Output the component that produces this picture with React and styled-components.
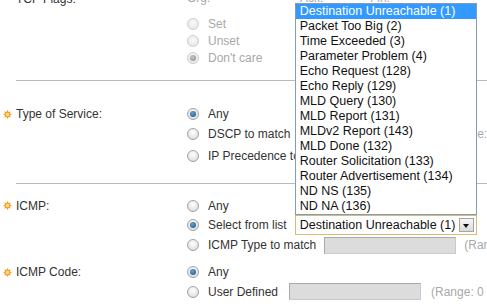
import React from "react";
import styled, { createGlobalStyle } from "styled-components";

const GlobalStyle = createGlobalStyle`
  html, body {
    margin: 0;
    padding: 0;
    background: #fff;
    overflow: hidden;
  }
  body {
    font-family: "Liberation Sans", Arial, sans-serif;
    font-size: 12px;
    color: #333;
  }
`;

const icmpTypes = [
  "Destination Unreachable (1)",
  "Packet Too Big (2)",
  "Time Exceeded (3)",
  "Parameter Problem (4)",
  "Echo Request (128)",
  "Echo Reply (129)",
  "MLD Query (130)",
  "MLD Report (131)",
  "MLDv2 Report (143)",
  "MLD Done (132)",
  "Router Solicitation (133)",
  "Router Advertisement (134)",
  "ND NS (135)",
  "ND NA (136)",
];

function Gear() {
  return (
    <svg width="9" height="9" viewBox="0 0 9 9">
      <polygon
        fill="#e99a26"
        points="8.9,4.5 6.9,5.5 7.61,7.61 5.5,6.9 4.5,8.9 3.5,6.9 1.39,7.61 2.1,5.5 0.1,4.5 2.1,3.5 1.39,1.39 3.5,2.1 4.5,0.1 5.5,2.1 7.61,1.39 6.9,3.5"
      />
      <circle cx="4.5" cy="4.5" r="1.9" fill="#ffd870" />
    </svg>
  );
}

function Radio({ label, checked, disabled, h, children }) {
  return (
    <Option $h={h} $disabled={disabled}>
      <RadioDot $checked={checked} $disabled={disabled} />
      <span>{label}</span>
      {children}
    </Option>
  );
}

function App() {
  return (
    <Page>
      <GlobalStyle />
      <Inner>
        <Section $pt={0} $pb={14}>
          <FieldLabel $h={17}>
            <Spacer />
            TCP Flags:
          </FieldLabel>
          <FlagGrid>
            <FlagColumn>
              <ColHead>Org.</ColHead>
              <Radio label="Set" disabled h={17} />
              <Radio label="Unset" disabled h={17} />
              <Radio label="Don't care" disabled checked h={17} />
            </FlagColumn>
            <FlagColumn>
              <ColHead>Ack.</ColHead>
            </FlagColumn>
            <FlagColumn>
              <ColHead>Fin.</ColHead>
            </FlagColumn>
          </FlagGrid>
        </Section>
        <Divider />

        <Section $pt={23} $pb={14}>
          <FieldLabel $h={20}>
            <Gear />
            Type of Service:
          </FieldLabel>
          <Options>
            <Radio label="Any" checked h={20} />
            <Radio label="DSCP to match" h={19}>
              <TextBox $ml={14} />
              <RangeText>(Range: 0 - 63)</RangeText>
            </Radio>
            <Radio label="IP Precedence to match" h={26} />
          </Options>
        </Section>
        <Divider />

        <Section $pt={12} $pb={0}>
          <FieldLabel $h={19}>
            <Gear />
            ICMP:
          </FieldLabel>
          <Options>
            <Radio label="Any" h={19} />
            <Radio label="Select from list" checked h={20}>
              <SelectBox>
                <ListBox>
                  {icmpTypes.map((t, i) => (
                    <ListItem key={t} $active={i === 0}>
                      {t}
                    </ListItem>
                  ))}
                </ListBox>
                <SelectText>Destination Unreachable (1)</SelectText>
                <ArrowButton />
              </SelectBox>
            </Radio>
            <Radio label="ICMP Type to match" h={20}>
              <TextBox $ml={8} />
              <RangeText>(Range: 0 - 255)</RangeText>
            </Radio>
          </Options>
        </Section>

        <Section $pt={7} $pb={0}>
          <FieldLabel $h={20}>
            <Gear />
            ICMP Code:
          </FieldLabel>
          <Options>
            <Radio label="Any" checked h={20} />
            <Radio label="User Defined" h={19}>
              <TextBox $ml={11} />
              <RangeText $ml={10}>(Range: 0 - 255)</RangeText>
            </Radio>
          </Options>
        </Section>
      </Inner>
    </Page>
  );
}

const Page = styled.div`
  width: 487px;
  height: 306px;
  overflow: hidden;
  position: relative;
`;

const Inner = styled.div`
  margin-top: -10px;
`;

const Section = styled.div`
  display: grid;
  grid-template-columns: 184px 1fr;
  padding: ${(p) => p.$pt}px 0 ${(p) => p.$pb}px 3px;
`;

const FieldLabel = styled.div`
  display: flex;
  align-items: center;
  gap: 4px;
  height: ${(p) => p.$h}px;
  color: #333;
  white-space: nowrap;
`;

const Spacer = styled.span`
  width: 9px;
`;

const FlagGrid = styled.div`
  display: grid;
  grid-template-columns: 113px 70px 1fr;
`;

const FlagColumn = styled.div`
  display: flex;
  flex-direction: column;
`;

const ColHead = styled.div`
  height: 17px;
  line-height: 17px;
  margin-bottom: 8px;
  color: #aaa;
`;

const Options = styled.div`
  display: flex;
  flex-direction: column;
`;

const Option = styled.label`
  display: flex;
  align-items: center;
  height: ${(p) => p.$h}px;
  white-space: nowrap;
  color: ${(p) => (p.$disabled ? "#a8a8a8" : "#333")};
`;

const RadioDot = styled.span`
  position: relative;
  flex: none;
  width: 12px;
  height: 12px;
  margin-right: 9px;
  box-sizing: border-box;
  border-radius: 50%;
  border: 1px solid ${(p) => (p.$disabled ? "#cfcfcf" : "#a3a3a3")};
  background: ${(p) =>
    p.$disabled
      ? "radial-gradient(circle at 50% 40%, #fafafa, #e2e2e2)"
      : "radial-gradient(circle at 50% 35%, #ffffff, #d6d6d6)"};

  &::after {
    content: "";
    display: ${(p) => (p.$checked ? "block" : "none")};
    position: absolute;
    left: 2px;
    top: 2px;
    width: 6px;
    height: 6px;
    border-radius: 50%;
    background: ${(p) =>
      p.$disabled
        ? "radial-gradient(circle at 40% 35%, #c4c4c4, #8e8e8e)"
        : "radial-gradient(circle at 40% 35%, #5fa3d6, #1b4f7e)"};
  }
`;

const Divider = styled.div`
  height: 1px;
  margin-left: 16px;
  background: #b9b9b9;
`;

const TextBox = styled.span`
  display: block;
  width: 132px;
  height: 17px;
  margin-left: ${(p) => p.$ml}px;
  box-sizing: border-box;
  background: #dcdcdc;
  border: 1px solid #cacaca;
  border-top-color: #a9a9a9;
  border-left-color: #a9a9a9;
`;

const RangeText = styled.span`
  margin-left: ${(p) => p.$ml || 8}px;
  color: #a9a9a9;
`;

const SelectBox = styled.div`
  position: relative;
  display: flex;
  align-items: center;
  width: 182px;
  height: 20px;
  margin-left: 8px;
  box-sizing: border-box;
  border: 1px solid #d9bb72;
  background: #fff;
  padding-left: 4px;
  font-size: 12.5px;
`;

const SelectText = styled.span`
  color: #111;
`;

const ArrowButton = styled.span`
  position: relative;
  margin-left: auto;
  margin-right: 2px;
  width: 15px;
  height: 14px;
  box-sizing: border-box;
  border: 1px solid #a5a5a5;
  background: linear-gradient(#f7f7f7, #d9d9d9);

  &::after {
    content: "";
    position: absolute;
    left: 3px;
    top: 5px;
    border-left: 3.5px solid transparent;
    border-right: 3.5px solid transparent;
    border-top: 4px solid #111;
  }
`;

const ListBox = styled.div`
  position: absolute;
  left: -1px;
  bottom: calc(100% + 1px);
  width: 182px;
  box-sizing: border-box;
  border: 1px solid #7f9db9;
  background: #fff;
  z-index: 2;
`;

const ListItem = styled.div`
  height: 15px;
  line-height: 15px;
  padding-left: 4px;
  color: ${(p) => (p.$active ? "#fff" : "#111")};
  background: ${(p) => (p.$active ? "#3399ff" : "transparent")};
`;

export default App;
